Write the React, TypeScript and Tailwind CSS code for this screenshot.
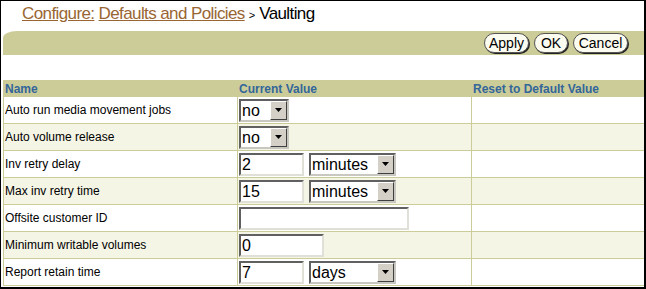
import React from 'react';

type Row = {
  label: string;
  control: React.ReactNode;
};

function Select({ value, width }: { value: string; width: number }) {
  return (
    <div
      className="flex h-[23px] border-2 border-t-[#606060] border-l-[#606060] border-r-[#c8c8c0] border-b-[#c8c8c0] bg-white"
      style={{ width }}
    >
      <div className="flex-1 pl-[1px] text-[16px] leading-[19px] text-black">{value}</div>
      <div className="flex h-[19px] w-[17px] items-center justify-center border border-t-white border-l-white border-r-[#404040] border-b-[#404040] bg-[#d4d0c8]">
        <svg width="7" height="4" viewBox="0 0 7 4">
          <path d="M0 0h7L3.5 4z" fill="#000" />
        </svg>
      </div>
    </div>
  );
}

function TextInput({ value, width }: { value: string; width: number }) {
  return (
    <div
      className="h-[23px] border-2 border-t-[#606060] border-l-[#606060] border-r-[#e0e0d8] border-b-[#e0e0d8] bg-white pl-[1px] text-[16px] leading-[19px] text-black"
      style={{ width }}
    >
      {value}
    </div>
  );
}

function PillButton({ label, width }: { label: string; width: number }) {
  return (
    <div
      className="flex h-[20px] items-center justify-center rounded-full border border-[#555] bg-[#fbfbf0] text-[14px] leading-none text-black shadow-[1px_1px_0_#222]"
      style={{ width }}
    >
      {label}
    </div>
  );
}

const rows: Row[] = [
  { label: 'Auto run media movement jobs', control: <Select value="no" width={50} /> },
  { label: 'Auto volume release', control: <Select value="no" width={50} /> },
  {
    label: 'Inv retry delay',
    control: (
      <div className="flex gap-[5px]">
        <TextInput value="2" width={65} />
        <Select value="minutes" width={87} />
      </div>
    ),
  },
  {
    label: 'Max inv retry time',
    control: (
      <div className="flex gap-[5px]">
        <TextInput value="15" width={65} />
        <Select value="minutes" width={87} />
      </div>
    ),
  },
  { label: 'Offsite customer ID', control: <TextInput value="" width={170} /> },
  { label: 'Minimum writable volumes', control: <TextInput value="0" width={85} /> },
  {
    label: 'Report retain time',
    control: (
      <div className="flex gap-[5px]">
        <TextInput value="7" width={65} />
        <Select value="days" width={87} />
      </div>
    ),
  },
];

export default function App() {
  return (
    <div className="h-[289px] w-[646px] overflow-hidden border-t border-l border-r-2 border-b-2 border-black bg-white font-['Liberation_Sans',Arial,sans-serif]">
      {/* Breadcrumb title */}
      <div className="h-[30px] pl-[21px] pt-[2px] text-[17px] leading-[22px] tracking-[-0.6px]">
        <a className="text-[#996633] underline">Configure:</a>{' '}
        <a className="text-[#996633] underline">Defaults and Policies</a>
        <span className="mx-[4px] text-[11px] tracking-normal text-black">&gt;</span>
        <span className="text-black">Vaulting</span>
      </div>

      {/* Action band */}
      <div className="ml-[2px] flex h-[24px] items-center justify-end gap-[5px] rounded-tl-[14px_7px] bg-[#cccc99] pr-[16px]">
        <PillButton label="Apply" width={45} />
        <PillButton label="OK" width={34} />
        <PillButton label="Cancel" width={55} />
      </div>

      {/* Settings table */}
      <table className="ml-[2px] mt-[25px] w-[641px] table-fixed border-collapse text-[12px]">
        <colgroup>
          <col className="w-[234px]" />
          <col className="w-[234px]" />
          <col className="w-[173px]" />
        </colgroup>
        <thead>
          <tr className="h-[16px] bg-[#cccc99] text-left font-bold text-[#336699]">
            <th className="border border-[#cccc99] pl-[1px] leading-[14px]">Name</th>
            <th className="border border-[#cccc99] pl-[1px] leading-[14px]">Current Value</th>
            <th className="border border-[#cccc99] pl-[1px] leading-[14px]">Reset to Default Value</th>
          </tr>
        </thead>
        <tbody>
          {rows.map((row, i) => (
            <tr key={row.label} className={i % 2 === 1 ? 'h-[27px] bg-[#f5f5e6]' : 'h-[27px] bg-white'}>
              <td className="border border-[#cccc99] pl-[1px] text-black">{row.label}</td>
              <td className="border border-[#cccc99] pl-[1px]">{row.control}</td>
              <td className="border border-[#cccc99]"></td>
            </tr>
          ))}
        </tbody>
      </table>
    </div>
  );
}
